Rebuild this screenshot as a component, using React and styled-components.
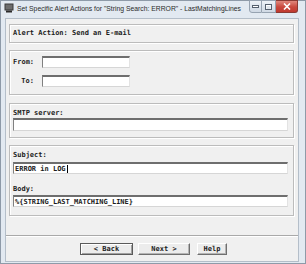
import React from 'react';
import styled, { createGlobalStyle } from 'styled-components';

const Global = createGlobalStyle`
  html, body { margin: 0; padding: 0; background: #ffffff; }
  body { width: 306px; height: 264px; overflow: hidden; }
`;

const Window = styled.div`
  width: 306px;
  height: 264px;
  box-sizing: border-box;
  background: #e2e9f1;
  border: 1px solid #8e9aa8;
  display: flex;
  flex-direction: column;
`;

const TitleBar = styled.div`
  height: 17px;
  display: flex;
  align-items: flex-start;
  padding: 0 7px 0 3px;
  box-sizing: border-box;
`;

const TitleIcon = styled.svg`
  margin-top: 2px;
  flex: none;
`;

const TitleText = styled.div`
  margin-left: 3px;
  margin-top: 4px;
  font-family: "Liberation Sans", Arial, sans-serif;
  font-size: 6.8px;
  line-height: 8px;
  color: #2a2a2a;
  white-space: nowrap;
  flex: 1;
  overflow: hidden;
`;

const Controls = styled.div`
  display: flex;
  flex: none;
  margin-top: -1px;
`;

const CtrlButton = styled.div`
  width: ${(p) => p.w}px;
  height: 13px;
  box-sizing: border-box;
  border: 1px solid ${(p) => (p.close ? '#8a3a33' : '#97a3b1')};
  border-left-width: ${(p) => (p.first ? 1 : 0)}px;
  border-radius: ${(p) => (p.first ? '0 0 0 3px' : p.close ? '0 0 3px 0' : '0')};
  background: ${(p) =>
    p.close
      ? 'linear-gradient(#e0877c, #c9483d 55%, #c0392f)'
      : 'linear-gradient(#eef2f7, #dbe3ec 55%, #d0d9e4)'};
  display: flex;
  align-items: center;
  justify-content: center;
`;

const Content = styled.div`
  flex: 1;
  margin: 0 6px 1px 4px;
  background: #f0f0f0;
  border: 1px solid #b4bec9;
  display: flex;
  flex-direction: column;
  font-family: "DejaVu Sans Mono", "Liberation Mono", monospace;
  font-weight: bold;
  font-size: 7px;
  color: #1c1c1c;
`;

const Body = styled.div`
  display: flex;
  flex-direction: column;
  padding: 5px 4px 0 3px;
`;

const Group = styled.div`
  border: 1px solid #bcbcbc;
  box-shadow: inset 1px 1px 0 #ffffff, 1px 1px 0 #ffffff;
  margin-top: ${(p) => p.mt || 0}px;
  padding: ${(p) => p.pad};
  display: flex;
  flex-direction: column;
`;

const Heading = styled.div`
  line-height: 17px;
  white-space: nowrap;
`;

const FormGrid = styled.div`
  display: grid;
  grid-template-columns: 21px 88px;
  column-gap: 8px;
  row-gap: 7px;
  align-items: center;
`;

const Label = styled.div`
  line-height: 8px;
  white-space: nowrap;
  text-align: ${(p) => (p.right ? 'right' : 'left')};
  margin-top: ${(p) => p.mt || 0}px;
`;

const Field = styled.div`
  height: ${(p) => p.h || 12}px;
  box-sizing: border-box;
  background: #ffffff;
  border-style: solid;
  border-width: 2px 1px 1px 1px;
  border-color: #6e6e6e #e3e3e3 #d6d6d6 #808080;
  margin-top: ${(p) => p.mt || 0}px;
  padding-left: 1px;
  display: flex;
  align-items: center;
  line-height: 8px;
  white-space: nowrap;
`;

const Caret = styled.span`
  display: inline-block;
  width: 1px;
  height: 8px;
  background: #000;
  margin-left: 1px;
`;

const Footer = styled.div`
  margin-top: 19px;
  border-top: 1px solid #a9a9a9;
  box-shadow: inset 0 1px 0 #ffffff;
  padding: 7px 0 0 3px;
  display: flex;
  justify-content: center;
  gap: 5px;
`;

const Button = styled.div`
  width: ${(p) => p.w}px;
  height: 12px;
  box-sizing: border-box;
  margin-left: ${(p) => p.ml || 0}px;
  background: #ececec;
  border: 1px solid;
  border-color: ${(p) =>
    p.def ? '#5a5a5a' : '#ffffff #6f6f6f #6f6f6f #ffffff'};
  box-shadow: ${(p) =>
    p.def ? 'inset 1px 1px 0 #ffffff, inset -1px -1px 0 #a0a0a0' : 'inset -1px -1px 0 #b4b4b4'};
  display: flex;
  align-items: center;
  justify-content: center;
  line-height: 8px;
  white-space: nowrap;
`;

export default function App() {
  return (
    <>
      <Global />
      <Window>
        <TitleBar>
          <TitleIcon width="10" height="10" viewBox="0 0 10 10">
            <rect x="0.5" y="0.5" width="9" height="7" fill="#3b3b3b" />
            <rect x="1.5" y="1.5" width="7" height="5" fill="#6d6d6d" />
            <rect x="2" y="7.5" width="6" height="2" fill="#2a2a2a" />
          </TitleIcon>
          <TitleText>
            Set Specific Alert Actions for "String Search: ERROR" - LastMatchingLines
          </TitleText>
          <Controls>
            <CtrlButton w={13} first>
              <svg width="7" height="3" viewBox="0 0 7 3">
                <rect x="0.5" y="0.5" width="6" height="2" fill="#fff" stroke="#55606e" strokeWidth="1" />
              </svg>
            </CtrlButton>
            <CtrlButton w={14}>
              <svg width="7" height="6" viewBox="0 0 7 6">
                <rect x="0.5" y="0.5" width="6" height="5" fill="#fff" stroke="#55606e" strokeWidth="1" />
                <rect x="1.5" y="2" width="4" height="3" fill="#dfe5ec" />
              </svg>
            </CtrlButton>
            <CtrlButton w={22} close>
              <svg width="8" height="7" viewBox="0 0 8 7">
                <path d="M1 0.5 L7 6.5 M7 0.5 L1 6.5" stroke="#ffffff" strokeWidth="1.6" />
              </svg>
            </CtrlButton>
          </Controls>
        </TitleBar>
        <Content>
          <Body>
            <Group pad="0 3px">
              <Heading>Alert Action: Send an E-mail</Heading>
            </Group>
            <Group mt={7} pad="5px 3px 7px 3px">
              <FormGrid>
                <Label right>From:</Label>
                <Field />
                <Label right>To:</Label>
                <Field />
              </FormGrid>
            </Group>
            <Group mt={8} pad="5px 5px 6px 3px">
              <Label>SMTP server:</Label>
              <Field h={13} mt={1} />
            </Group>
            <Group mt={7} pad="5px 5px 8px 3px">
              <Label>Subject:</Label>
              <Field mt={3}>
                ERROR in LOG<Caret />
              </Field>
              <Label mt={11}>Body:</Label>
              <Field mt={2}>%&#123;STRING_LAST_MATCHING_LINE&#125;</Field>
            </Group>
          </Body>
          <Footer>
            <Button w={53} def>&lt; Back</Button>
            <Button w={52}>Next &gt;</Button>
            <Button w={30} ml={2}>Help</Button>
          </Footer>
        </Content>
      </Window>
    </>
  );
}
